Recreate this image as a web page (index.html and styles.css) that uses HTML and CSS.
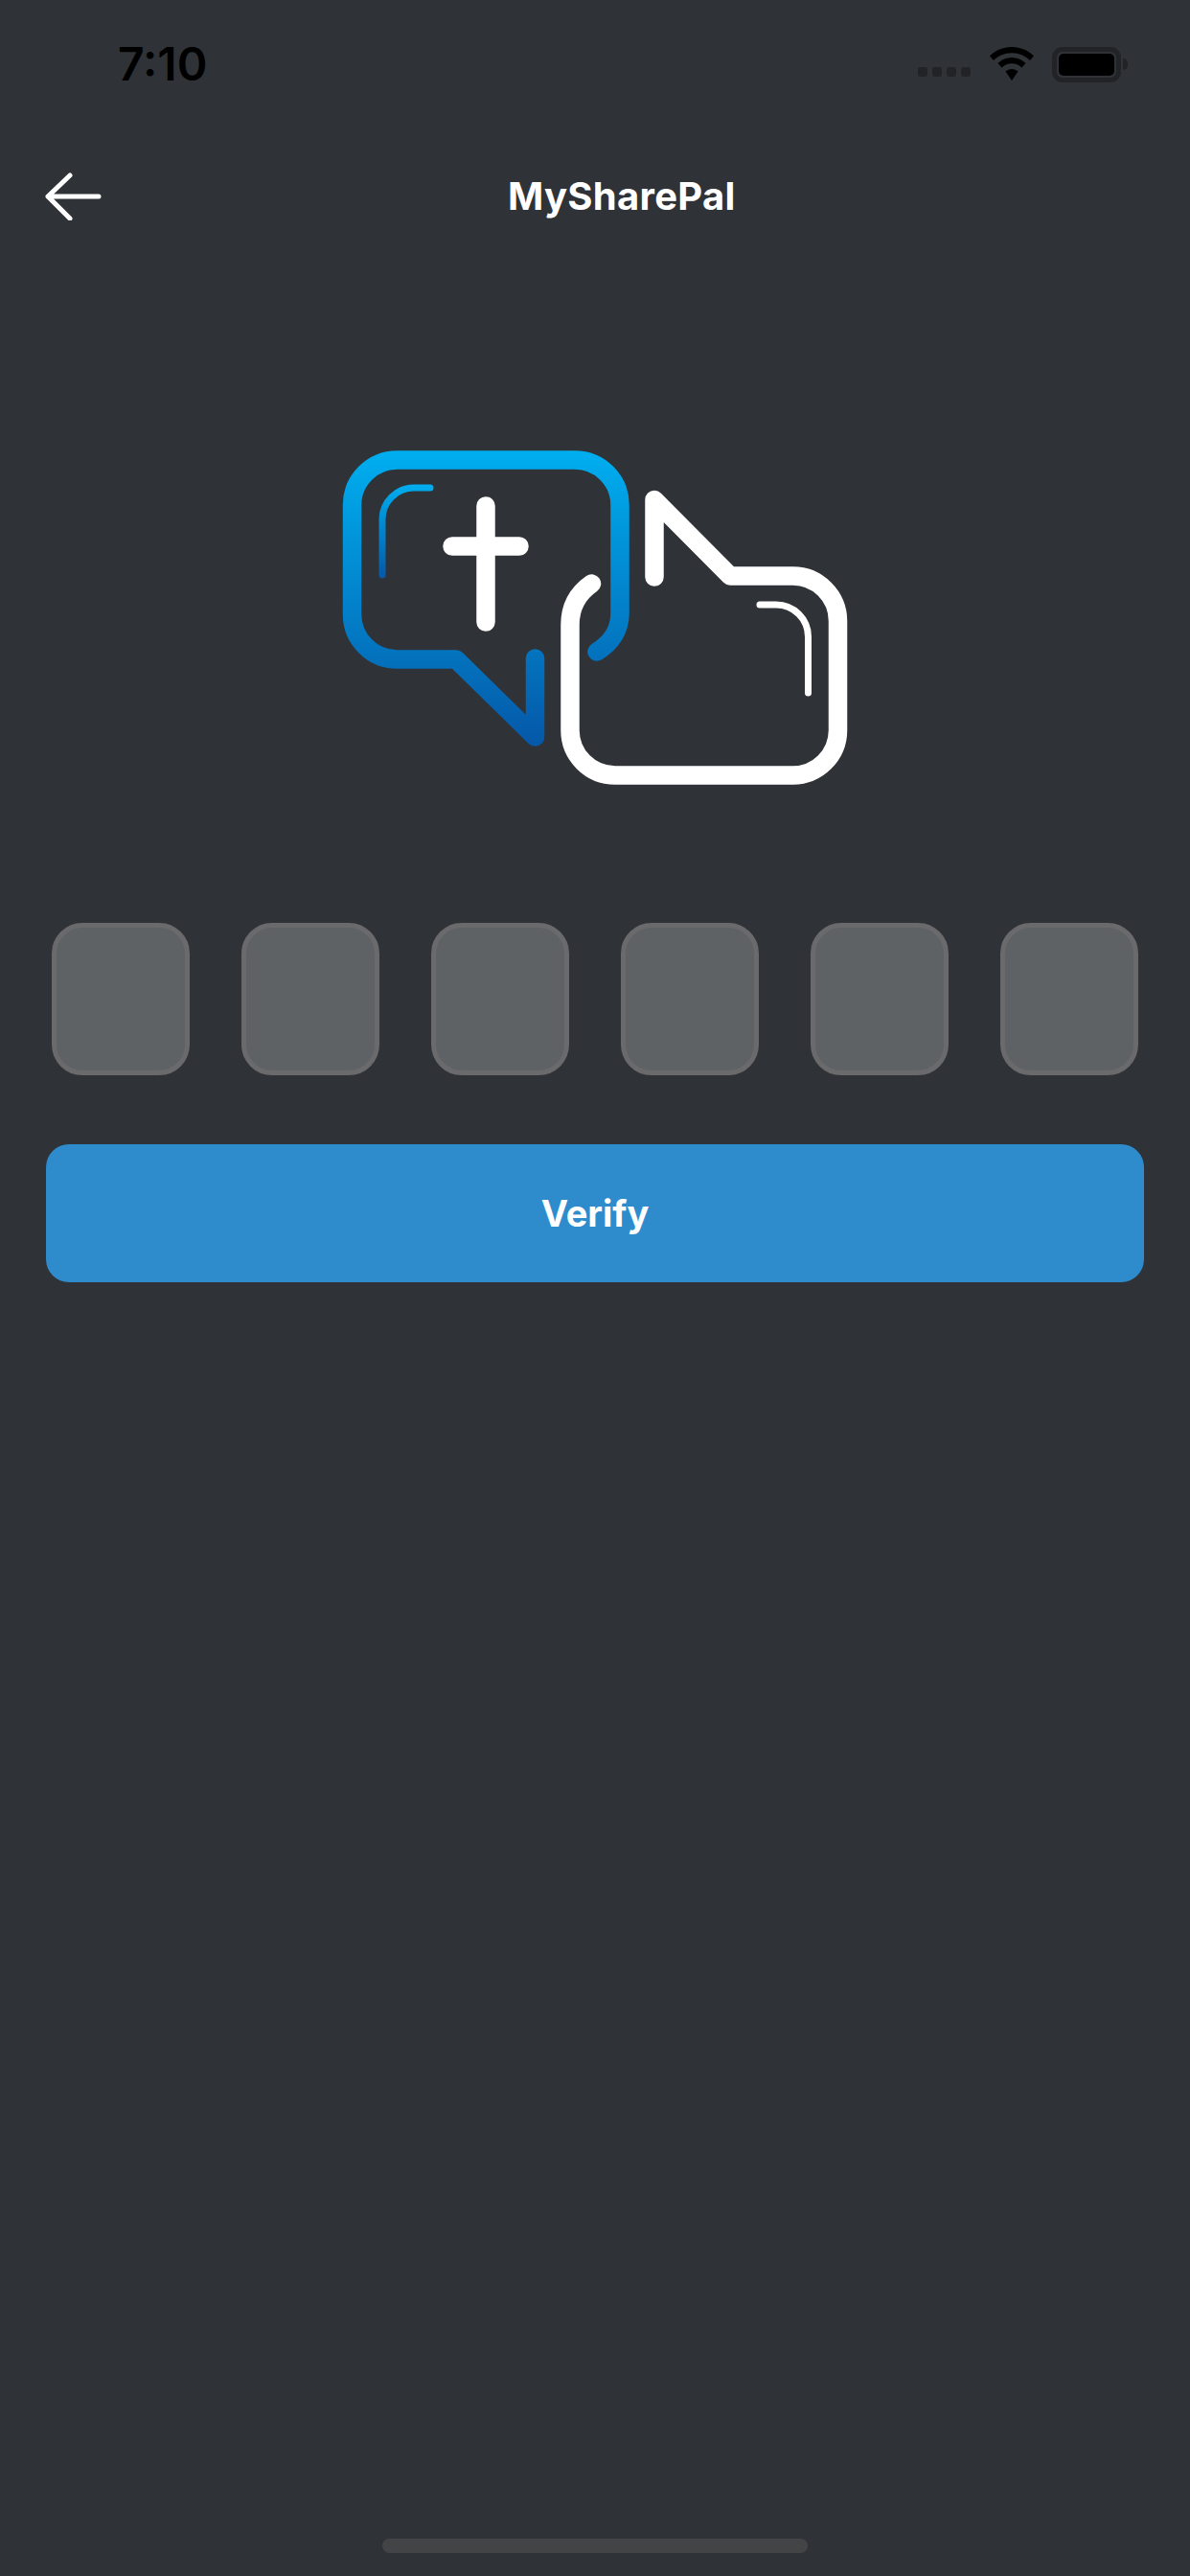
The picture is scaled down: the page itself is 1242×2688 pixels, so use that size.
FILE: index.html
```html
<!DOCTYPE html>
<html lang="en">
<head>
<meta charset="utf-8">
<title>MySharePal</title>
<link rel="stylesheet" href="styles.css">
</head>
<body>
<div class="screen">
  <div class="status">
    <span class="time">7:10</span>
    <div class="status-icons">
      <div class="signal"><i></i><i></i><i></i><i></i></div>
      <svg class="wifi" width="48" height="36" viewBox="0 0 48 36"><path fill="#000" d="M24 0C15 0 7 3.500 1 9.500L5 14C10 9 16.500 6.200 24 6.200S38 9 43 14L47 9.500C41 3.500 33 0 24 0ZM24 11C18.500 11 13.500 13.200 9.500 17L13.500 21.500C16.500 18.800 20 17.300 24 17.300S31.500 18.800 34.500 21.500L38.500 17C34.500 13.200 29.500 11 24 11ZM24 23C21.500 23 19.500 24 17.500 25.500L24 35L30.500 25.500C28.500 24 26.500 23 24 23Z"/></svg>
      <div class="battery"><div class="battery-fill"></div></div>
      <div class="battery-cap"></div>
    </div>
  </div>
  <header class="nav">
    <svg class="back" width="60" height="50" viewBox="0 0 60 50"><path d="M3 25H56M26 3L3 25L26 48" fill="none" stroke="#fff" stroke-width="5" stroke-linecap="round" stroke-linejoin="round"/></svg>
    <h1 class="title">MySharePal</h1>
  </header>
  <div class="logo-wrap">
    <svg class="logo" width="540" height="360" viewBox="350 465 540 360">
      <defs>
        <linearGradient id="blue" gradientUnits="userSpaceOnUse" x1="0" y1="471" x2="0" y2="778">
          <stop offset="0" stop-color="#00aeef"/>
          <stop offset="1" stop-color="#0558a8"/>
        </linearGradient>
        <linearGradient id="blue2" gradientUnits="userSpaceOnUse" x1="0" y1="505" x2="0" y2="604">
          <stop offset="0" stop-color="#00aeef"/>
          <stop offset="1" stop-color="#0558a8"/>
        </linearGradient>
      </defs>
      <g fill="none" stroke-linecap="round" stroke-linejoin="round">
        <path stroke="url(#blue)" stroke-width="19.500" d="M623 680C638 671 647 657 647 640V527A47 47 0 0 0 600 480H414.500A47 47 0 0 0 367.500 527V641A47 47 0 0 0 414.500 688H476L558.500 769V687"/>
        <path stroke="url(#blue2)" stroke-width="7" d="M449 509H432A33 33 0 0 0 399 542V600"/>
        <path stroke="#fff" stroke-width="19.500" d="M507 528V649M472 570H542"/>
        <path stroke="#fff" stroke-width="19.500" d="M683 602V521.500L762 601H827A47 47 0 0 1 874.500 648V762A47 47 0 0 1 827 809H642A47 47 0 0 1 595 762V652C595 633 603 619 617.500 609"/>
        <path stroke="#fff" stroke-width="7" d="M793 631H810A33.500 33.500 0 0 1 843.500 664.500V723"/>
      </g>
    </svg>
  </div>
  <div class="otp">
    <div class="otp-box"></div>
    <div class="otp-box"></div>
    <div class="otp-box"></div>
    <div class="otp-box"></div>
    <div class="otp-box"></div>
    <div class="otp-box"></div>
  </div>
  <div class="actions">
    <button class="verify">Verify</button>
  </div>
  <div class="home-wrap"><div class="home"></div></div>
</div>
</body>
</html>
```
FILE: styles.css
```css
* { box-sizing: border-box; }
html, body { margin: 0; padding: 0; }
body { background: #2f3236; font-family: "Inter", "Liberation Sans", sans-serif; }
.screen { width: 1242px; height: 2688px; display: flex; flex-direction: column; overflow: hidden; background: #2f3236; }
.status { height: 68px; padding: 0 65px 0 123px; margin-top: 33px; display: flex; justify-content: space-between; align-items: center; }
.time { font-size: 48px; font-weight: 600; color: #000; line-height: 1; }
.status-icons { display: flex; align-items: center; }
.signal { display: flex; gap: 5px; margin-right: 19px; margin-top: 16px; }
.signal i { width: 10px; height: 10px; border-radius: 3px; background: #212327; display: block; }
.wifi { margin-right: 18px; }
.battery { width: 72px; height: 37px; border: 5px solid #212327; border-radius: 11px; padding: 2px; }
.battery-fill { width: 100%; height: 100%; background: #000; border-radius: 5px; }
.battery-cap { width: 5px; height: 12px; margin-left: 2px; background: #212327; border-radius: 0 6px 6px 0; }
.nav { height: 100px; margin-top: 54px; padding-left: 47px; display: flex; align-items: center; }
.back { display: block; flex: none; }
.title { margin: 0 0 0 423px; font-size: 40px; font-weight: 700; letter-spacing: 0.3px; color: #fff; line-height: 1.2; }
.logo-wrap { padding: 210px 0 0 350px; }
.logo { display: block; }
.otp { margin-top: 138px; padding: 0 54px; display: flex; justify-content: space-between; }
.otp-box { width: 144px; height: 159px; border: 5px solid #6a6a6c; border-radius: 32px; background: #5e6265; }
.actions { padding: 72px 48px 0; }
.verify { display: block; width: 100%; height: 144px; border: 0; border-radius: 24px; background: #2e8ccd; color: #fff; font: 700 38px "Inter", "Liberation Sans", sans-serif; }
.home-wrap { margin-top: auto; padding-bottom: 24px; display: flex; justify-content: center; }
.home { width: 444px; height: 15px; border-radius: 8px; background: #434446; }
```
